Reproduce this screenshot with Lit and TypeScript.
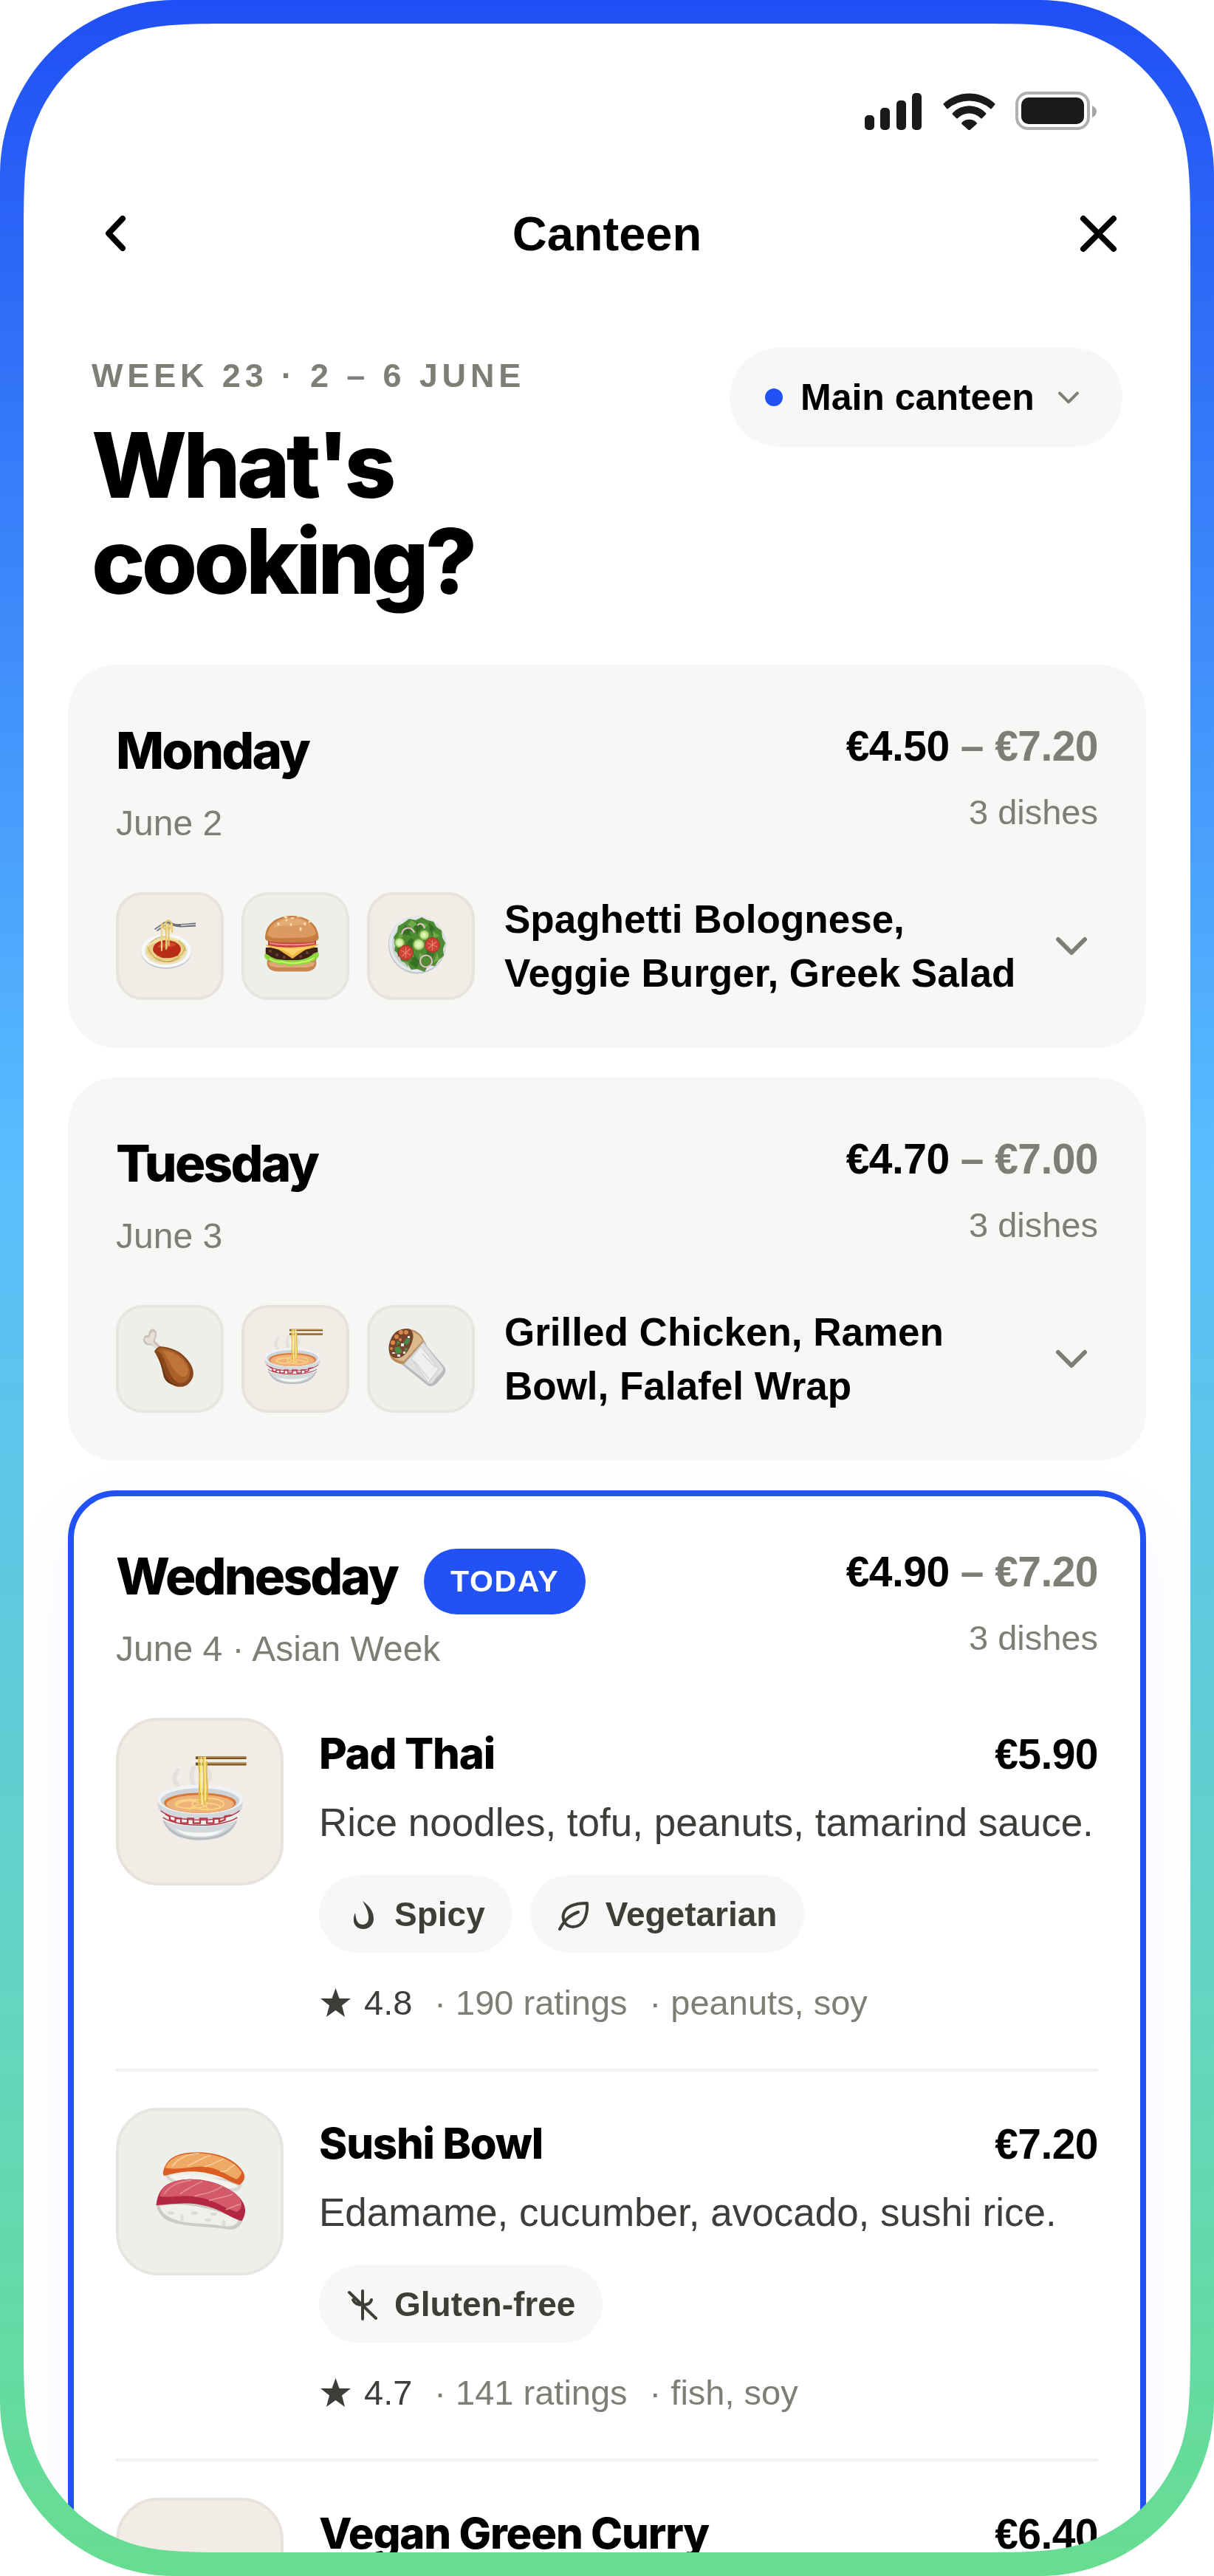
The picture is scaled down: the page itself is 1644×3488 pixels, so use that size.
import { LitElement, html, css, svg, unsafeCSS, nothing } from "lit";
import { customElement, property } from "lit/decorators.js";
import { classMap } from "lit/directives/class-map.js";

type Tone = "sand" | "sage";

interface Food {
  icon: string;
  tone: Tone;
}

interface Dish extends Food {
  name: string;
  price: string;
  description?: string;
  tags?: string[];
  rating?: string;
  votes?: string;
  allergens?: string;
}

interface Day {
  name: string;
  date: string;
  from: string;
  to: string;
  count: string;
  today?: boolean;
  foods?: Food[];
  summary?: string;
  dishes?: Dish[];
}

const DAYS: Day[] = [
  {
    name: "Monday",
    date: "June 2",
    from: "€4.50",
    to: "€7.20",
    count: "3 dishes",
    foods: [
      { icon: "spaghetti", tone: "sand" },
      { icon: "burger", tone: "sage" },
      { icon: "salad", tone: "sand" },
    ],
    summary: "Spaghetti Bolognese, Veggie Burger, Greek Salad",
  },
  {
    name: "Tuesday",
    date: "June 3",
    from: "€4.70",
    to: "€7.00",
    count: "3 dishes",
    foods: [
      { icon: "chicken", tone: "sage" },
      { icon: "ramen", tone: "sand" },
      { icon: "wrap", tone: "sage" },
    ],
    summary: "Grilled Chicken, Ramen Bowl, Falafel Wrap",
  },
  {
    name: "Wednesday",
    date: "June 4 · Asian Week",
    from: "€4.90",
    to: "€7.20",
    count: "3 dishes",
    today: true,
    dishes: [
      {
        icon: "ramen",
        tone: "sand",
        name: "Pad Thai",
        price: "€5.90",
        description: "Rice noodles, tofu, peanuts, tamarind sauce.",
        tags: ["Spicy", "Vegetarian"],
        rating: "4.8",
        votes: "190 ratings",
        allergens: "peanuts, soy",
      },
      {
        icon: "sushi",
        tone: "sage",
        name: "Sushi Bowl",
        price: "€7.20",
        description: "Edamame, cucumber, avocado, sushi rice.",
        tags: ["Gluten-free"],
        rating: "4.7",
        votes: "141 ratings",
        allergens: "fish, soy",
      },
      { icon: "", tone: "sand", name: "Vegan Green Curry", price: "€6.40" },
    ],
  },
];

// Food drawings, all on an 80 x 80 grid.
const FOODS: Record<string, unknown> = {
  spaghetti: svg`
    <ellipse cx="39" cy="51" rx="34" ry="23" fill="#c3c8cd" />
    <ellipse cx="39" cy="49.5" rx="34" ry="22.5" fill="#f7f8f9" />
    <ellipse cx="39" cy="49.5" rx="29" ry="19" fill="#dfe3e6" />
    <ellipse cx="39" cy="48.5" rx="27" ry="17" fill="#e6cd83" />
    <g fill="none" stroke="#f4e3a6" stroke-width="1.6">
      <ellipse cx="39" cy="48" rx="27" ry="15" />
      <ellipse cx="36" cy="51" rx="24" ry="16" />
      <ellipse cx="43" cy="49" rx="22" ry="17" />
    </g>
    <g fill="none" stroke="#b8933f" stroke-width="0.8">
      <path d="M14 44c4 12 14 19 25 20M64 46c-3 10-12 17-24 18M18 38c8-7 14-8 20-8" />
      <path d="M22 58c10 8 26 9 36 0M56 36c6 4 9 8 9 14" />
    </g>
    <path d="M21 48c0-8 8-13 18-13s20 5 20 12c0 4-3 6-4 9-5 1-8 4-15 3-8 1-9-2-13-3-2-3-6-4-6-8z" fill="#b92d18" />
    <path d="M27 44c6-7 19-8 26-3-5 4-20 5-26 3z" fill="#d8472c" />
    <path d="M24 20l13-9 9 1M27 22l10-7" fill="none" stroke="#777c80" stroke-width="2" stroke-linecap="round" />
    <path d="M41 10c6 0 8 4 17 3l21-1.500v5l-20 1c-8 0-11-3-18-4z" fill="#6b7074" />
    <path d="M59 14l20-1v1.500l-20 1.500z" fill="#c8ccd0" />
    <g fill="none" stroke="#e2c568" stroke-width="2.200" stroke-linecap="round">
      <path d="M33 13v36M39 14v33M42.500 13v29M47 13v11M35 14c1 7 4 9 5 3" />
      <path d="M38 12c2-5 8-5 8 2s-6 8-8 1" />
    </g>
    <g fill="none" stroke="#f7e9b4" stroke-width="0.9">
      <path d="M33 15v31M40 15v31M46 13v9" />
    </g>
  `,
  burger: svg`
    <path d="M6 62h66c2 9-3 15.500-15 15.500H21C9 77.500 4 71 6 62z" fill="#c9854f" />
    <path d="M8 65h62c0 5-5 7-14 7H22c-9 0-14-2-14-7z" fill="#e0a878" />
    <path d="M4 45h70c1 8 1 13-3 17H8c-4-4-5-10-4-17z" fill="#3d2117" />
    <g fill="#704132">
      <circle cx="10" cy="50" r="2" />
      <circle cx="19" cy="55" r="2" />
      <circle cx="29" cy="58" r="2" />
      <circle cx="51" cy="57" r="2" />
      <circle cx="60" cy="52" r="2" />
      <circle cx="69" cy="54" r="2" />
    </g>
    <path d="M3 53c6 2 9 7 18 8 14 2 29 2 36-1 8-2 11-8 18-9 2 5 0 9-3 9-2 5-6 3-8 5-4 5-7 0-11 3-5 3-7-1-11 0-5 4-9 1-13-1-5 3-9 1-12-2-5 2-7-1-9-3-5-1-7-4-5-9z" fill="#8fd83d" />
    <path d="M9 60c6 4 13 5 17 4 7 3 22 3 28 0 6 1 10-2 15-5" fill="none" stroke="#c6f56f" stroke-width="2" />
    <path d="M7 36h65v7c-9 4-55 4-65 0z" fill="#c03d44" />
    <path d="M9 39c16 3 45 3 61 0" fill="none" stroke="#ed8a86" stroke-width="2" />
    <path d="M3 41c20 5 50 5 73-1-6 7-15 6-20 9L40 60 23 49C17 45 9 47 3 41z" fill="#f0b73f" />
    <path d="M9 43c20 4 40 4 60 0-12 5-17 3-29 13C30 47 22 48 9 43z" fill="#ffd36c" />
    <path d="M3 32C3 13 19 2 39 2s36 11 36.500 30c0 5-8 6.500-36.500 6.500S3 37 3 32z" fill="#c67c41" />
    <path d="M6 28C9 12 23 4 39 4s29 7 33 22c-7 6-17 6-33 6S11 34 6 28z" fill="#dc9a60" />
    <path d="M14 19C20 9 30 5 40 6c9 0 15 2 20 6-9 5-36 1-46 7z" fill="#e8b27e" opacity=".7" />
    <g fill="#f8e1b5">
      <ellipse cx="21" cy="13" rx="1.500" ry="2.300" />
      <ellipse cx="31" cy="4" rx="2.400" ry="1.300" />
      <ellipse cx="32" cy="8" rx="1.500" ry="1.800" />
      <ellipse cx="40" cy="5" rx="2" ry="1.300" />
      <ellipse cx="38" cy="14" rx="1.400" ry="2.300" />
      <ellipse cx="51" cy="20" rx="1.500" ry="2.700" />
      <ellipse cx="57" cy="13" rx="1.500" ry="2.300" />
      <ellipse cx="63" cy="10" rx="1.400" ry="2" />
      <ellipse cx="48" cy="3" rx="2" ry="1.300" />
    </g>
  `,
  salad: svg`
    <circle cx="39" cy="41.500" r="39" fill="#bfc7c9" />
    <circle cx="39" cy="40.500" r="38" fill="#e3e8ea" />
    <circle cx="39" cy="41" r="34" fill="#cbd2d2" />
    <path d="M20 12l8-6 9 2 8-4 8 4 8 2 4 7 7 5 1 9 4 8-3 8 1 9-7 6-5 8-9-1-5 9-10-4-8 1-5-8-9-4-2-8-7-6 2-9-3-9 5-7 1-8z" fill="#4f8b32" />
    <g fill="#387224">
      <path d="M22 16l9 4-4 8-9-1zM39 10l8 8-8 7-5-7zM57 12l7 9-9 2zM30 32l8 5-6 9-9-5zM52 47l9 8-10 4zM33 57l10 6-5 10-9-6zM12 45l6 7-5 6z" />
    </g>
    <g fill="#71aa48">
      <path d="M31 8l8 5-7 6-6-5zM46 12l7 2-4 6zM60 23l9 6-8 4zM66 52l3 9-8 5zM28 50l8 2-3 7zM42 52l7 4-8 5zM15 24l5 6-7 4zM21 64l6 1-1 6z" />
    </g>
    <g fill="none" stroke="#2d6220" stroke-width="1">
      <path d="M22 14l8 15M39 12v15M55 12l5 17M31 46l8 18M62 51l-4 12M16 43l-3 11" />
    </g>
    <g fill="#bfe386" stroke="#72a548" stroke-width="1.500">
      <circle cx="15" cy="38.500" r="6.500" />
      <circle cx="48.500" cy="28" r="6.500" />
      <circle cx="41" cy="41" r="7.500" />
    </g>
    <g fill="#e3f5bd">
      <circle cx="15" cy="38.500" r="3.500" />
      <circle cx="48" cy="28" r="3" />
      <circle cx="41" cy="41" r="4" />
    </g>
    <g fill="#cb4334" stroke="#9e3025">
      <circle cx="23.500" cy="52" r="10" />
      <circle cx="59.500" cy="41.500" r="10" />
    </g>
    <g fill="none" stroke="#e8826a" stroke-width="1.200">
      <path d="M23.500 45v14M17 49l13 6M18 57l11-10M59.500 35v14M53 39l13 5M54 46l11-9" />
    </g>
    <g fill="none" stroke="#e9bfd2" stroke-width="2">
      <path d="M18 27c2-11 14-11 17-2M39 15c4-5 9-1 10 4" />
      <circle cx="51" cy="63.500" r="8" />
    </g>
  `,
  chicken: svg`
    <path d="M28 32L19 24C13 26 8 22 8 17c0-5 4-7 7-6 0-11 11-11 11-2 0 5-2 7-2 10l11 10z" fill="#cbc0b8" />
    <path d="M10 15c4-2 6 0 7-2 1-7 6-9 7-4 0 6-3 8-2 12l7 8-4 1-6-8c-5 2-9-3-9-7z" fill="#e6dfd8" />
    <path d="M30 26c15 1 28 6 37 17 8 9 12 20 6 29-5 9-18 12-27 5C34 68 36 54 23 33c2-4 4-5 7-7z" fill="#88481b" />
    <path d="M31 28c13 1 24 6 32 15 11 12 10 26 2 31-9 5-16-2-21-12-6-13-8-25-17-30z" fill="#aa602a" />
    <path d="M34 31c13 2 22 7 28 14 7 8 8 17 4 21-6 4-13-3-19-12C42 45 38 38 34 31z" fill="#c47a3d" opacity=".8" />
    <path d="M27 36c8 12 7 26 15 35 4 5 9 7 15 7-9 2-20-2-22-14-2-9-4-17-8-28z" fill="#6d3411" />
  `,
  ramen: svg`
    <g fill="none" stroke="#c7c5c3" stroke-width="4" stroke-linecap="round" opacity=".3">
      <path d="M20 29c-5-6-2-10 0-14M34 27c-3-5-1-10 0-14M45 27c5-5 4-8 1-13" />
    </g>
    <path d="M2 41h76c0 12-5 20-12 27-6 6-15 9-26 9s-20-3-26-9C7 61 2 53 2 41z" fill="#d5d8da" />
    <path d="M5 53c5 15 17 22 35 22s30-7 35-22c-3 12-8 24-35 24S8 65 5 53z" fill="#b8bdc1" />
    <path d="M17 66c7 6 38 6 46 0-6 6-14 8-23 8s-17-2-23-8z" fill="#f5f6f6" />
    <path d="M3 50c11 12 63 12 74 0l-2 8c-12 9-58 9-70 0z" fill="#edeeee" />
    <path d="M5 51c12 11 58 11 70 0M7 57c13 9 53 9 66 0" fill="none" stroke="#b53a46" stroke-width="1" />
    <path d="M9 54l4 2v3l5 2v-3h5v4h6v-4h5v4h6v-4h6v4h6v-4h5v3l5-2v-3l6-1" fill="none" stroke="#b53a46" stroke-width="1.500" />
    <ellipse cx="40" cy="41" rx="38" ry="13" fill="#f0f3f5" />
    <ellipse cx="40" cy="42" rx="35" ry="11" fill="#cdd3d7" />
    <ellipse cx="40" cy="44" rx="32" ry="9" fill="#d87837" />
    <ellipse cx="40" cy="45" rx="30" ry="8" fill="#efb17a" />
    <g fill="none" stroke="#f8d680" stroke-width="1.200">
      <ellipse cx="32" cy="45" rx="14" ry="4" />
      <ellipse cx="47" cy="45" rx="14" ry="5" />
      <path d="M18 46c8-6 20-5 29 3M30 50c9-7 20-7 28-3" />
    </g>
    <path d="M36 4h45M36 9.500h45" stroke="#765126" stroke-width="2.500" />
    <path d="M42 3.500h39M42 9h39" stroke="#bd8d46" stroke-width="1" />
    <g fill="none" stroke="#e3b840" stroke-width="1.500">
      <path d="M39 3v9c2 9-1 19 1 33M43 3v9c1 9-1 22 1 33M46 7c-2 12 2 24 0 36" />
    </g>
    <g fill="none" stroke="#f9e78e" stroke-width="1.500">
      <path d="M41 3v11c-2 12 1 19 1 31M44.500 3c-1 15 1 27 0 39" />
    </g>
  `,
  wrap: svg`
    <path d="M16 49L47 18c4 0 3 5 6 9l23 27c4 7-2 12-7 18-6 8-12 10-17 6z" fill="#b7b9bb" />
    <path d="M22 50l25-29 27 34c1 8-9 10-12 18-3 5-8 4-10 1z" fill="#dedfe0" />
    <path d="M31 42l13-16 24 31-14 18zM46 36l18 19M35 46l20 24" fill="#efefef" stroke="#d0d1d3" stroke-width="1.200" />
    <path d="M27 2c11 2 19 8 21 17L20 50C8 49 2 43 1 34z" fill="#ba8a57" />
    <path d="M30 5c10 3 15 9 16 14L21 46c-8 0-13-3-17-9z" fill="#dcb98d" />
    <path d="M23 2c9-1 13 7 9 18-5 16-15 25-25 21C-2 37-1 22 6 11c5-7 11-8 17-9z" fill="#76442c" />
    <g fill="#d98748">
      <circle cx="17" cy="7" r="3" />
      <circle cx="11" cy="13" r="3" />
      <circle cx="24" cy="7" r="3" />
      <circle cx="6" cy="21" r="3" />
      <circle cx="4" cy="29" r="2" />
      <circle cx="16" cy="17" r="2" />
    </g>
    <path d="M24 15l6 2-4 7-6-2zM8 28l7-2 4 8-8 3zM22 28l5 1-5 6zM12 18l4 3-5 4z" fill="#4d8a45" />
    <path d="M17 22h4v4h-4zM12 37h4v3h-4zM26 12h3v3h-3zM5 34h4v2H5zM20 33h3v3h-3z" fill="#dde6eb" />
  `,
  sushi: svg`
    <path d="M9 27c5 3 59 4 69 6-1 8-4 11-10 9-8-3-45-4-54-8-3-2-5-4-5-7z" fill="#d7d7d0" />
    <path d="M12 29c16-3 47 2 62 9-7 5-21 0-29-1-9-1-25 0-33-8z" fill="#f4f3ef" />
    <path d="M7 27C9 12 22 8 38 8c18 0 33 6 40 17 3 5 1 9-3 12-8-2-15-8-27-10-15-4-29-1-40 2z" fill="#dc5d23" />
    <path d="M9 22c4-10 15-13 29-13 18 0 33 7 39 17-2 3-2 5-5 6-11-5-14-9-27-11-12-1-22 3-36 1z" fill="#eeaa65" />
    <g fill="none" stroke="#fad0a0" stroke-width="1">
      <path d="M15 21C20 13 31 9 39 9M29 20c7-3 14-8 20-9M44 21c6-2 12-5 17-7M58 25c6 1 9-4 13-6" />
    </g>
    <path d="M1 54c10-4 68 2 77 13-2 8-7 11-16 9-11-2-38-1-52-8-5-3-8-8-9-14z" fill="#cbcbc5" />
    <path d="M4 56c20-5 54 3 70 12-3 9-14 5-25 4C30 71 9 70 4 56z" fill="#f0efeb" />
    <g fill="#dddcd6">
      <ellipse cx="14" cy="62" rx="3" ry="1.500" />
      <ellipse cx="24" cy="66" rx="1.500" ry="3" />
      <ellipse cx="35" cy="62" rx="3" ry="1.500" />
      <ellipse cx="47" cy="68" rx="3" ry="1.500" />
      <ellipse cx="61" cy="71" rx="1.500" ry="3" />
      <ellipse cx="52" cy="63" rx="3" ry="1.500" />
    </g>
    <path d="M1 55c1-10 5-17 13-20 19-7 42-1 55 8 11 8 14 17 8 26-11-3-19-11-35-14-13-3-26-1-41 0z" fill="#b32741" />
    <path d="M4 47c3-12 16-15 28-15 18 0 37 8 44 18 2 6 0 9-3 11-12-3-20-11-35-13-14-3-23 1-34-1z" fill="#d55a69" />
    <g fill="none" stroke="#e2929b" stroke-width="1">
      <path d="M8 45c7-9 15-11 24-12M22 45c8-5 14-9 20-11M35 47c10-3 17-3 25-9M48 51c8-3 16-3 21-6M63 59c5-2 9-4 13-5" />
    </g>
  `,
};

// Small line icons, on a 45 x 45 grid.
const GLYPHS: Record<string, unknown> = {
  Spicy: svg`<path fill="currentColor" d="M22 5c8 6 15 13 15 24 0 8-6 14-14 14S9 37 10 29c0-3 1-6 2-8 1 7 2 16 10 16 6 0 9-5 8-12-1-8-4-13-8-20z" />`,
  Vegetarian: svg`
    <g fill="none" stroke="currentColor" stroke-width="4" stroke-linecap="round" stroke-linejoin="round">
      <path d="M40 8c-16 0-29 4-32 15-2 9 4 17 13 17 14 0 20-15 19-32z" />
      <path d="M3 43c7-13 14-19 25-23" />
    </g>
  `,
  "Gluten-free": svg`
    <path fill="none" stroke="currentColor" stroke-width="4" stroke-linecap="round"
      d="M22 5v38M4 7l36 35M9 17c2 5 7 7 13 7 6 0 11-2 12-7" />
  `,
  star: svg`<path fill="currentColor" d="M22.500 3l5 14H43L31 26.500 35 42l-12.500-9L10 42l4-15.500L2 17h15.500z" />`,
};

const icon = (name: string) => html`
  <svg class="glyph" viewBox="0 0 45 45" aria-hidden="true">${GLYPHS[name]}</svg>
`;

const chevronDown = html`
  <svg class="chevron" viewBox="0 0 48 28" aria-hidden="true">
    <path d="M6 5l18 18L42 5" fill="none" stroke="currentColor" stroke-width="6" stroke-linecap="round" stroke-linejoin="round" />
  </svg>
`;

/** One quarter of the smooth screen outline, turned to face its corner. */
const corner = (angle: number) =>
  unsafeCSS(
    `url("data:image/svg+xml,${encodeURIComponent(
      `<svg xmlns="http://www.w3.org/2000/svg" width="300" height="300" viewBox="0 0 300 300"><path transform="rotate(${angle} 150 150)" d="M300 0C213 0 168 0 125 20C78 41 41 78 20 125C0 168 0 213 0 300H300Z"/></svg>`
    )}")`
  );

const tile = css`
  * {
    box-sizing: border-box;
  }

  .tile {
    border: 4px solid;
    display: grid;
    flex: none;
    place-items: center;
  }

  .tile svg {
    overflow: visible;
  }

  .tile.sand {
    background: #f1ece6;
    border-color: #e8e2dc;
  }

  .tile.sage {
    background: #edf0ea;
    border-color: #e4e7e1;
  }
`;

/** A rounded tile that holds the drawing of one dish. */
const renderTile = (food: Food) => html`
  <div class=${classMap({ tile: true, [food.tone]: true })}>
    ${food.icon
      ? html`<svg viewBox="0 0 80 80" aria-hidden="true">${FOODS[food.icon]}</svg>`
      : nothing}
  </div>
`;

@customElement("dish-row")
export class DishRow extends LitElement {
  static styles = [
    tile,
    css`
      :host {
        display: flex;
        gap: 48px;
      }

      .tile {
        border-radius: 57px;
        height: 227px;
        padding-bottom: 10px;
        width: 227px;
      }

      .tile svg {
        width: 122px;
      }

      .body {
        flex: 1;
        min-width: 0;
      }

      .title {
        align-items: baseline;
        display: flex;
        font-size: 57px;
        justify-content: space-between;
        line-height: 97px;
      }

      h3 {
        font-family: Inter, sans-serif;
        font-size: 58px;
        font-weight: 800;
        letter-spacing: -0.02em;
        margin: 0;
      }

      .price {
        font-weight: 700;
        letter-spacing: -0.01em;
      }

      p {
        color: #3d3d3a;
        font-size: 53px;
        line-height: 72px;
        margin: 8px 0 35px;
      }

      .tags {
        color: #3d3d3a;
        display: flex;
        flex-wrap: wrap;
        font-size: 46px;
        font-weight: 700;
        gap: 24px;
        list-style: none;
        margin: 0 0 32px;
        padding: 0;
      }

      .tags li {
        align-items: center;
        background: #f7f7f5;
        border-radius: 53px;
        display: flex;
        gap: 20px;
        height: 105px;
        padding: 0 37px;
      }

      .glyph {
        flex: none;
        height: 45px;
        width: 45px;
      }

      .facts {
        color: #7e7e76;
        display: flex;
        font-size: 47px;
        gap: 30px;
        line-height: 71px;
      }

      .rating {
        align-items: center;
        color: #3d3d3a;
        display: flex;
        gap: 16px;
      }
    `,
  ];

  @property({ attribute: false }) dish!: Dish;

  render() {
    const { dish } = this;
    return html`
      ${renderTile(dish)}
      <div class="body">
        <div class="title">
          <h3>${dish.name}</h3>
          <span class="price">${dish.price}</span>
        </div>
        ${dish.description ? html`<p>${dish.description}</p>` : nothing}
        ${dish.tags
          ? html`<ul class="tags">
              ${dish.tags.map((tag) => html`<li>${icon(tag)}${tag}</li>`)}
            </ul>`
          : nothing}
        ${dish.rating
          ? html`<div class="facts">
              <span class="rating">${icon("star")}${dish.rating}</span>
              <span>· ${dish.votes}</span>
              <span>· ${dish.allergens}</span>
            </div>`
          : nothing}
      </div>
    `;
  }
}

@customElement("day-card")
export class DayCard extends LitElement {
  static styles = [
    tile,
    css`
      :host {
        display: block;
      }

      .card {
        background: #f7f7f5;
        border: 8px solid transparent;
        border-radius: 65px;
        padding: 57px;
      }

      .card.today {
        background: #fff;
        border-color: #2251f5;
        box-shadow: 0 32px 97px rgb(34 81 245 / 5%);
      }

      header {
        display: flex;
        justify-content: space-between;
        margin-bottom: 57px;
      }

      .name {
        align-items: flex-end;
        display: flex;
        gap: 36px;
      }

      h2 {
        font-family: Inter, sans-serif;
        font-size: 69px;
        font-weight: 800;
        letter-spacing: -0.04em;
        line-height: 103px;
        margin: 0;
      }

      .badge {
        background: #2251f5;
        border-radius: 45px;
        color: #fff;
        font-size: 41px;
        font-weight: 700;
        letter-spacing: 0.04em;
        line-height: 89px;
        padding: 0 36px;
      }

      .date,
      .count {
        color: #7e7e76;
        line-height: 73px;
      }

      .date {
        font-size: 48px;
        margin-top: 10px;
      }

      .count {
        font-size: 47px;
        margin-top: 8px;
      }

      .prices {
        text-align: right;
      }

      .range {
        color: #7e7e76;
        font-size: 57px;
        font-weight: 700;
        letter-spacing: -0.01em;
        line-height: 90px;
      }

      .range strong {
        color: #000;
      }

      .preview {
        align-items: center;
        display: flex;
        gap: 24px;
      }

      .tiles {
        display: flex;
        gap: 24px;
        margin-right: 16px;
      }

      .preview .tile {
        border-radius: 36px;
        height: 146px;
        padding: 0 8px 6px 0;
        width: 146px;
      }

      .preview .tile svg {
        width: 80px;
      }

      .summary {
        flex: 1;
        font-size: 53px;
        font-weight: 700;
        line-height: 73px;
        margin: 0;
      }

      button {
        background: none;
        border: 0;
        color: #7e7e76;
        cursor: pointer;
        display: grid;
        height: 73px;
        padding: 0;
        place-items: center;
        width: 73px;
      }

      .chevron {
        width: 48px;
      }

      dish-row + dish-row {
        border-top: 4px solid #f1f1f0;
        margin-top: 54px;
        padding-top: 49px;
      }
    `,
  ];

  @property({ attribute: false }) day!: Day;

  render() {
    const { day } = this;
    return html`
      <article class=${classMap({ card: true, today: !!day.today })}>
        <header>
          <div>
            <div class="name">
              <h2>${day.name}</h2>
              ${day.today ? html`<span class="badge">TODAY</span>` : nothing}
            </div>
            <div class="date">${day.date}</div>
          </div>
          <div class="prices">
            <div class="range"><strong>${day.from}</strong> – ${day.to}</div>
            <div class="count">${day.count}</div>
          </div>
        </header>
        ${day.foods ? this.renderPreview() : nothing}
        ${day.dishes?.map((dish) => html`<dish-row .dish=${dish}></dish-row>`)}
      </article>
    `;
  }

  renderPreview() {
    return html`
      <div class="preview">
        <div class="tiles">${this.day.foods!.map(renderTile)}</div>
        <p class="summary">${this.day.summary}</p>
        <button type="button" aria-label="Show dishes">${chevronDown}</button>
      </div>
    `;
  }
}

@customElement("app-root")
export class AppRoot extends LitElement {
  static styles = css`
    :host {
      background: #fff;
      color: #000;
      display: block;
      font-family: "Liberation Sans", Arial, sans-serif;
    }

    * {
      box-sizing: border-box;
    }

    .phone {
      background: linear-gradient(#204ff5, #58beff 45%, #63d5c0 78%, #66dd90);
      border-radius: 236px;
      height: 100vh;
      overflow: hidden;
      padding: 32px;
    }

    .screen {
      background: #fff;
      height: 100%;
      -webkit-mask:
        ${corner(0)} left top / 300px 300px no-repeat,
        ${corner(90)} right top / 300px 300px no-repeat,
        ${corner(180)} right bottom / 300px 300px no-repeat,
        ${corner(270)} left bottom / 300px 300px no-repeat,
        linear-gradient(#000, #000) center / calc(100% - 600px) 100% no-repeat,
        linear-gradient(#000, #000) center / 100% calc(100% - 600px) no-repeat;
      overflow: hidden;
      padding: 92px 60px 0;
    }

    .status {
      display: flex;
      justify-content: flex-end;
      padding-right: 66px;
    }

    .status svg {
      height: 52px;
      width: 315px;
    }

    nav {
      align-items: center;
      display: flex;
      height: 97px;
      justify-content: space-between;
      margin: 92px 32px 106px;
    }

    nav button {
      background: none;
      border: 0;
      color: inherit;
      cursor: pointer;
      height: 65px;
      padding: 0;
      width: 65px;
    }

    nav span {
      font-size: 65px;
      font-weight: 700;
    }

    .intro {
      align-items: flex-start;
      display: flex;
      gap: 48px;
      justify-content: space-between;
      margin: 0 32px 75px;
    }

    .week {
      color: #7e7e76;
      font-size: 45px;
      font-weight: 700;
      letter-spacing: 0.13em;
      line-height: 76px;
    }

    h1 {
      font-family: Inter, sans-serif;
      font-size: 122px;
      font-weight: 800;
      letter-spacing: -0.04em;
      line-height: 130px;
      margin: 18px 0 0;
    }

    .picker {
      align-items: center;
      background: #f7f7f5;
      border-radius: 67px;
      display: flex;
      flex: none;
      gap: 24px;
      height: 134px;
      padding: 0 57px 0 48px;
    }

    .picker::before {
      background: #2251f5;
      border-radius: 50%;
      content: "";
      height: 24px;
      width: 24px;
    }

    .picker select {
      appearance: none;
      background: none;
      border: 0;
      color: inherit;
      font: 700 50px/73px "Liberation Sans", Arial, sans-serif;
      margin: 0;
      padding: 0;
    }

    .picker .chevron {
      color: #7e7e76;
      margin-left: 6px;
      pointer-events: none;
      width: 32px;
    }

    .days {
      display: grid;
      gap: 40px;
    }
  `;

  render() {
    return html`
      <div class="phone">
        <main class="screen">
          ${this.renderStatus()}
          <nav>
            <button type="button" aria-label="Back">
              <svg viewBox="0 0 65 65" fill="none" stroke="currentColor" stroke-width="8" stroke-linecap="round" stroke-linejoin="round">
                <path d="M42 12L23 32l19 20" />
              </svg>
            </button>
            <span>Canteen</span>
            <button type="button" aria-label="Close">
              <svg viewBox="0 0 65 65" fill="none" stroke="currentColor" stroke-width="8" stroke-linecap="round">
                <path d="M12 12l41 41M53 12L12 53" />
              </svg>
            </button>
          </nav>
          <section class="intro">
            <div>
              <div class="week">WEEK 23 · 2 – 6 JUNE</div>
              <h1>What's cooking?</h1>
            </div>
            <div class="picker">
              <select aria-label="Canteen">
                <option>Main canteen</option>
              </select>
              ${chevronDown}
            </div>
          </section>
          <div class="days">
            ${DAYS.map((day) => html`<day-card .day=${day}></day-card>`)}
          </div>
        </main>
      </div>
    `;
  }

  renderStatus() {
    return html`
      <div class="status">
        <svg viewBox="0 0 315 52" fill="#1a1a1a" aria-hidden="true">
          <rect x="0" y="32" width="13" height="20" rx="5" />
          <rect x="21" y="22" width="13" height="30" rx="5" />
          <rect x="43" y="12" width="13" height="40" rx="5" />
          <rect x="64" y="2" width="13" height="50" rx="5" />
          <path d="M107 16a51 51 0 0 1 69 0q1 1 0 2l-4 5q-1 1-2 0a44 44 0 0 0-57 0q-1 1-2 0l-4-5q-1-1 0-2z" />
          <path d="M119 29a31 31 0 0 1 45 0q1 1 0 2l-5 5q-1 1-2 0a22 22 0 0 0-31 0q-1 1-2 0l-5-5q-1-1 0-2z" />
          <path d="M131.500 42a14 14 0 0 1 20 0q1 1 0 2l-9 8q-1 1-2 0l-9-8q-1-1 0-2z" />
          <rect x="206" y="2" width="97" height="48" rx="15" fill="none" stroke="#b0b0b0" stroke-width="4" />
          <rect x="212" y="8" width="85" height="36" rx="10" />
          <path d="M308 19q6 3 6 8t-6 8z" fill="#a6a6a6" />
        </svg>
      </div>
    `;
  }
}
